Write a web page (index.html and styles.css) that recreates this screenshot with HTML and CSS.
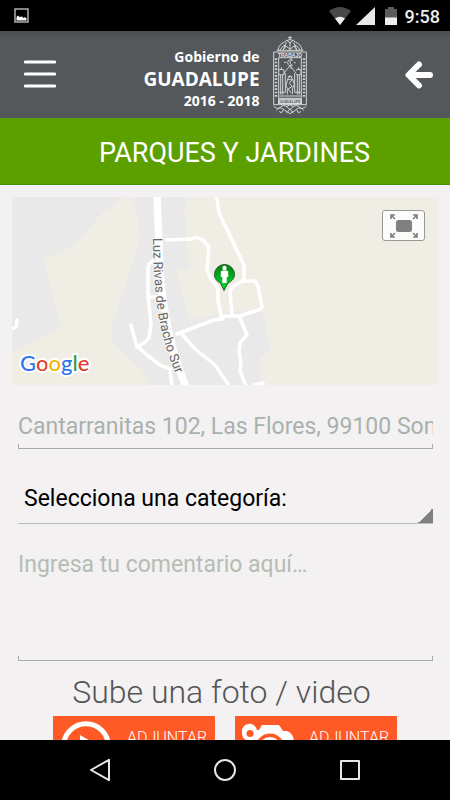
FILE: index.html
```html
<!DOCTYPE html>
<html lang="es">
<head>
<meta charset="utf-8">
<meta name="viewport" content="width=device-width, initial-scale=1">
<title>Parques y Jardines</title>
<link rel="stylesheet" href="styles.css">
</head>
<body>
<div class="status">
  <svg class="status-pic" width="16" height="16" viewBox="0 0 16 16" aria-hidden="true"><rect x="1" y="1" width="13" height="13" fill="none" stroke="#bbb" stroke-width="1.4"/><path d="M2.500 12.500V9L4 7.500 5.500 9 8 8.500 9.500 10 11 9l1.500 1.500v2z" fill="#fff"/></svg>
  <div class="status-icons">
    <svg width="22" height="18" viewBox="0 0 22 18" aria-hidden="true"><path d="M0 4Q11-4 22 4L11 18z" fill="#484848"/><path d="M6 11.500Q11 8 16 11.500L11 18z" fill="#eee"/></svg>
    <svg width="19" height="18" viewBox="0 0 19 18" aria-hidden="true"><path d="M19 0v18H0z" fill="#e8e8e8"/></svg>
    <svg width="12" height="18" viewBox="0 0 12 18" aria-hidden="true"><path d="M0 2h3V0h6v2h3v9H0z" fill="#5c5c5c"/><path d="M0 10.500h12V18H0z" fill="#eee"/></svg>
  </div>
  <span class="clock">9:58</span>
</div>

<header class="appbar">
  <button class="icon-btn" type="button" aria-label="Menú">
    <svg width="32" height="30" viewBox="0 0 32 30"><path d="M1.500 2h29M1.500 14h29M1.500 26h29" stroke="#fff" stroke-width="3.200" stroke-linecap="round"/></svg>
  </button>
  <div class="brand">
    <div class="brand-text">
      <span class="brand-small">Gobierno de</span>
      <span class="brand-name">GUADALUPE</span>
      <span class="brand-small">2016 - 2018</span>
    </div>
    <svg class="crest" width="36" height="80" viewBox="0 0 108 240" aria-hidden="true">
      <g fill="none" stroke="#d2d4d5" stroke-width="3">
        <path d="M54 3v12M48 8h12M44 17q10-7 20 0M18 46q2-18 20-25l6-5 10 8 10-8 6 5q18 7 20 25"/>
        <path d="M24 45q8-14 18-16M84 45q-8-14-18-16M33 46l9-13 12 10 12-10 9 13M54 20v25M43 22l-9 22M65 22l9 22M14 46h80"/>
        <path d="M5 51h98v158H5z" stroke-width="3"/>
        <path d="M20 68h68v124H20z"/>
        <path d="M12 70v120M96 70v120" stroke-width="7" stroke-dasharray="5 5"/>
        <path d="M21 106q8-8 15 0v12q-8 4-15 0M72 106q8-8 15 0v12q-8 4-15 0M28 97v8M80 97v8"/>
        <path d="M36 114l18-22 18 22M26 119v60M32 119v60M76 119v60M82 119v60M40 114v58M68 114v58"/>
        <path d="M46 178v-18l-4-8 5-20 7-10 8 10 5 16-6 14v16M48 134h12l-8 12 9 8-13 8 9 12M47 125h14"/>
        <path d="M61 75q-12-4-14 8 2 13 14 8-7-2-7-8 1-6 7-8M57 67v7M43 82h-7M65 83h6M57 95v7"/>
        <path d="M22 183h64M22 190h64M22 172h18M68 172h18"/>
        <path d="M5 213q12 14 25 0 10-6 24 12 14-18 24-12 13 14 25 0M13 226q10-13 22-3l-6 10q-5 2-6-5M95 226q-10-13-22-3l6 10q5 2 6-5M35 224l19 12 19-12M42 216l12-7 12 7M44 235l10-14 10 14"/>
      </g>
      <path d="M18 193h72v15H18z" fill="#d8dadb"/>
      <text class="crest-motto" x="54" y="65" text-anchor="middle">TRABAJO</text>
      <text class="crest-name" x="54" y="205" text-anchor="middle">GUADALUPE</text>
    </svg>
  </div>
  <button class="icon-btn icon-btn-end" type="button" aria-label="Regresar">
    <svg width="30" height="30" viewBox="0 0 30 30"><path d="M15 4.500L4.500 15 15 25.500M5 15h21" fill="none" stroke="#fff" stroke-width="6" stroke-linecap="round" stroke-linejoin="round"/></svg>
  </button>
</header>

<h1 class="title">PARQUES Y JARDINES</h1>

<main class="content">
  <section class="map" aria-label="Mapa">
    <svg class="map-art" viewBox="12 197 426 188" preserveAspectRatio="xMidYMid slice">
      <path d="M12 197h426v188H12z" fill="#f0ede5"/>
      <path d="M12 197h109l-5 5-5 5-9 6-19 22-12 12-15 8-13 4 18 68-49 25z" fill="#e9e9e9"/>
      <path d="M134 197h53l-3 12 5 60-13 1 14 50 47-9 25-1 9 40-12 10 3 25H150l-8-15-31-29 1-15 26-80 2-10z" fill="#e9e9e9"/>
      <g fill="none" stroke="#fff" stroke-width="3.500" stroke-linecap="round" stroke-linejoin="round">
        <path d="M157 197l2 45q0 38 6 70 7 43 22 77" stroke-width="7.500" stroke-linecap="butt"/>
        <path d="M167 240l25-1 4-2 7 3 6 7-2 23 4 9 7 9v13l4 18"/>
        <path d="M216 192l3 21 25 52v15l-12 7-2 4 2 23"/>
        <path d="M244 281h11l3 5 4 21-3 3-20 6h-14l-4 3-7 1-37 14"/>
        <path d="M239 316l8 19-7 8-1 9 2 10-1 9 6 15M254 385l9-2"/>
        <path d="M181 333l14 16 20 16 15 22"/>
        <path d="M153 261l-4 3-1 4v28l3 28-2 14-5 5-7 4-6-22M137 346l10 9 13 10 10 4 2 18M148 297h9"/>
        <path d="M12 329l4-2 1-7"/>
      </g>
      <path id="street" d="M153 238Q153 274 157 306Q162 344 179 381" fill="none"/>
      <text class="street-name"><textPath href="#street">Luz Rivas de Bracho Sur</textPath></text>
      <defs><linearGradient id="pin" x1="0" y1="0" x2="0" y2="1"><stop offset="0" stop-color="#087d10"/><stop offset="1" stop-color="#00e632"/></linearGradient></defs>
      <path d="M224 290.500l-3.500-7.500c-3.500-1.500-6-4.500-6-8.500a10 10 0 0 1 20 0c0 4-3 7-6.500 8.500z" fill="url(#pin)" stroke="#245b28"/>
      <circle cx="224.500" cy="268" r="2.200" fill="#fff"/>
      <path d="M222 270.500h5l1.200 1v5.500h-1.500v6h-4.400v-6h-1.500v-5.500z" fill="#fff"/>
      <text class="google" x="20" y="371"><tspan class="g-blue">G</tspan><tspan class="g-red">o</tspan><tspan class="g-yellow">o</tspan><tspan class="g-blue">g</tspan><tspan class="g-green">l</tspan><tspan class="g-red">e</tspan></text>
    </svg>
    <button class="expand" type="button" aria-label="Ampliar mapa">
      <svg width="28" height="24" viewBox="0 0 28 24"><rect x="6" y="6" width="16" height="12" rx="2.500" fill="#808080"/><g fill="none" stroke="#808080" stroke-width="1.700"><path d="M1 5V1h4M1 1l4 4M23 1h4v4M27 1l-4 4M1 19v4h4M1 23l4-4M27 19v4h-4M27 23l-4-4"/></g></svg>
    </button>
  </section>

  <form class="report">
    <input class="field address" type="text" aria-label="Dirección" placeholder="Cantarranitas 102, Las Flores, 99100 Som">
    <select class="category" aria-label="Categoría"><option>Selecciona una categoría:</option></select>
    <textarea class="field comment" aria-label="Comentario" placeholder="Ingresa tu comentario aquí…"></textarea>
    <h2 class="upload-title">Sube una foto / video</h2>
    <div class="uploads">
      <button class="attach" type="button">
        <svg width="52" height="52" viewBox="0 0 52 52" aria-hidden="true"><circle cx="26" cy="26" r="22.300" fill="none" stroke="#fff" stroke-width="5"/><path d="M20 15l19 11-19 11z" fill="#fff"/></svg>
        <span>ADJUNTAR</span>
      </button>
      <button class="attach" type="button">
        <svg width="52" height="52" viewBox="0 0 52 52" aria-hidden="true"><path d="M15 10h2l3-5h17l4 6h4q6 2 7 10v24H4V20q-4-2-4-7a7.500 7.500 0 0 1 15-3z" fill="#fff"/><circle cx="8" cy="13.500" r="3.500" fill="#ff5a26"/><circle cx="28" cy="28" r="14.500" fill="#ff5a26"/><circle cx="28" cy="28" r="11" fill="#fff"/></svg>
        <span>ADJUNTAR</span>
      </button>
    </div>
  </form>
</main>

<nav class="sysnav" aria-label="Sistema">
  <button type="button" aria-label="Atrás"><svg width="24" height="24" viewBox="0 0 24 24"><path d="M3 12L21 1.800v20.400z"/></svg></button>
  <button type="button" aria-label="Inicio"><svg width="24" height="24" viewBox="0 0 24 24"><circle cx="12" cy="12" r="10"/></svg></button>
  <button type="button" aria-label="Recientes"><svg width="24" height="24" viewBox="0 0 24 24"><rect x="3" y="3" width="18" height="18"/></svg></button>
</nav>
</body>
</html>
```
FILE: styles.css
```css
* { box-sizing: border-box; }

body {
  margin: 0;
  height: 100vh;
  display: flex;
  flex-direction: column;
  overflow: hidden;
  background: #f3f1f2;
  font-family: Roboto, "Liberation Sans", sans-serif;
}

button, input, select, textarea { font: inherit; margin: 0; border: 0; border-radius: 0; padding: 0; background: none; }
svg { display: block; }

.status {
  flex: none;
  display: flex;
  align-items: center;
  height: 31px;
  padding: 0 10px 0 14px;
  background: #000;
  color: #eee;
}
.status-icons { display: flex; gap: 10px; margin: 0 8px 0 auto; }
.status-icons svg:first-child { margin-right: -5px; }
.clock { font-size: 18px; font-weight: 500; line-height: 20px; padding-top: 2px; }

.appbar {
  flex: none;
  display: grid;
  grid-template-columns: 1fr auto 1fr;
  align-items: center;
  height: 87px;
  padding: 0 16px 0 24px;
  background: linear-gradient(#4b4e50, #54585a 8px);
}
.icon-btn { justify-self: start; }
.icon-btn-end { justify-self: end; }
.brand { display: flex; align-items: center; gap: 12px; padding-right: 7px; }
.brand-text {
  display: flex;
  flex-direction: column;
  align-items: flex-end;
  padding-top: 8px;
  color: #fff;
  font-family: "Open Sans", sans-serif;
  font-weight: 700;
}
.brand-small { font-size: 14px; line-height: 20px; }
.brand-name { font-size: 19px; line-height: 24px; }
.crest text { fill: #e4e5e6; font-family: "Liberation Sans", sans-serif; font-weight: 700; }
.crest-motto { font-size: 15px; }
.crest text.crest-name { font-size: 10px; fill: #54585a; }

.title {
  flex: none;
  margin: 0;
  height: 67px;
  padding: 2px 0 0 19px;
  background: #5ca000;
  border-bottom: 1px solid #439000;
  color: #fff;
  font-size: 27px;
  font-weight: 400;
  line-height: 66px;
  text-align: center;
}

.content { flex: 1; min-height: 0; overflow: hidden; padding: 12px 12px 0; }

.map { position: relative; height: 188px; }
.map-art { width: 100%; height: 100%; }
.street-name {
  fill: #666;
  stroke: #f7f7f7;
  stroke-width: 2px;
  paint-order: stroke;
  font-size: 13px;
}
.google { font-family: Lato, sans-serif; font-size: 22px; font-weight: 500; stroke: #fff; stroke-width: 4px; stroke-linejoin: round; paint-order: stroke; }
.g-blue { fill: #2f73e8; }
.g-red { fill: #e33b2e; }
.g-yellow { fill: #f5b400; }
.g-green { fill: #2d9a4b; }
.expand {
  position: absolute;
  top: 13px;
  right: 13px;
  display: grid;
  place-items: center;
  width: 43px;
  height: 31px;
  border: 1px solid #999;
  border-radius: 3px;
  background: #fcfcfb;
}

.report { display: flex; flex-direction: column; padding: 0 5px 0 6px; }
.field {
  display: block;
  width: 100%;
  color: #333;
  background:
    linear-gradient(#aaa, #aaa) bottom / 100% 1px no-repeat,
    linear-gradient(#aaa, #aaa) left bottom / 1px 5px no-repeat,
    linear-gradient(#aaa, #aaa) right bottom / 1px 5px no-repeat;
  font-size: 23px;
  line-height: 28px;
  outline: 0;
  resize: none;
}
.field::placeholder { opacity: 1; color: #a9b1ad; }
.address { height: 37px; margin-top: 27px; padding: 0 0 8px; }
.category {
  appearance: none;
  width: 100%;
  height: 49px;
  margin-top: 26px;
  padding: 0 16px 0 6px;
  border-bottom: 1px solid #bbb;
  background: linear-gradient(135deg, transparent 50%, #808080 50%) right bottom / 15px 15px no-repeat;
  color: #000;
  font-size: 23px;
  line-height: 28px;
}
.comment { height: 111px; margin-top: 26px; padding: 1px 0 0; overflow: hidden; }
.comment::placeholder { color: #b6bcb4; }
.upload-title {
  margin: 11px 0 4px;
  padding-right: 8px;
  color: #555;
  font-size: 32px;
  font-weight: 300;
  line-height: 40px;
  text-align: center;
}
.uploads { display: grid; grid-template-columns: 1fr 1fr; gap: 20px; padding: 0 36px 0 35px; }
.attach {
  display: flex;
  align-items: flex-start;
  gap: 15px;
  height: 60px;
  padding: 4px 7px;
  background: #ff5a26;
  color: #fff;
  font-size: 16px;
  font-weight: 300;
  line-height: 20px;
}
.attach svg { flex: none; }
.attach span { padding-top: 8px; }

.sysnav {
  flex: none;
  display: grid;
  grid-template-columns: repeat(3, 1fr);
  height: 60px;
  padding: 0 37px;
  background: #000;
}
.sysnav button { display: grid; place-items: center; }
.sysnav svg { fill: none; stroke: #e6e6e6; stroke-width: 2; stroke-linejoin: round; }
```
